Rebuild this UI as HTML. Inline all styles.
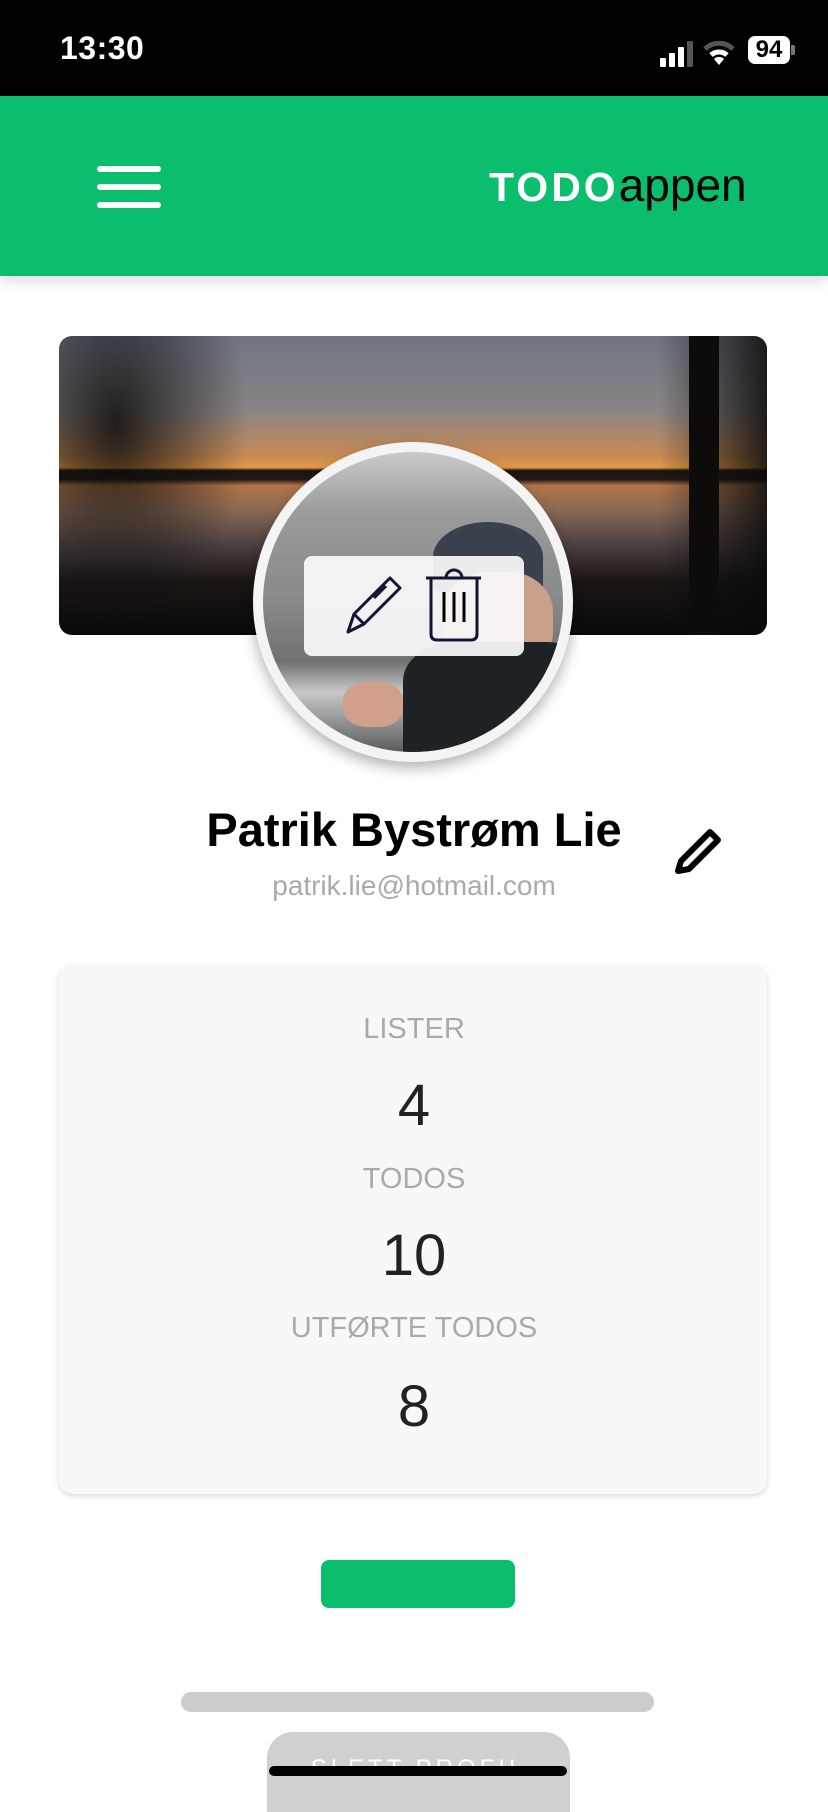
<!DOCTYPE html>
<html><head><meta charset="utf-8"><style>
*{margin:0;padding:0;box-sizing:border-box}
body{width:828px;height:1792px;overflow:hidden;background:#fff;font-family:"Liberation Sans",sans-serif;position:relative}
.abs{position:absolute}
</style></head><body>
<div class="abs" style="left:0;top:0;width:828px;height:96px;background:#000"></div>
<div class="abs" style="left:60px;top:30px;color:#fff;font-size:32px;font-weight:600;letter-spacing:0.5px">13:30</div>
<div class="abs" style="left:660px;top:58px;width:6px;height:9px;background:#fff;border-radius:1px"></div>
<div class="abs" style="left:669px;top:53px;width:6px;height:14px;background:#fff;border-radius:1px"></div>
<div class="abs" style="left:678px;top:47px;width:6px;height:20px;background:#fff;border-radius:1px"></div>
<div class="abs" style="left:687px;top:41px;width:6px;height:26px;background:#555;border-radius:1px"></div>
<svg class="abs" style="left:703px;top:38px" width="32" height="30" viewBox="0 0 32 30"><path d="M2 11 A20 20 0 0 1 30 11" stroke="#555" stroke-width="5" fill="none"/><path d="M8 17 A12 12 0 0 1 24 17" stroke="#fff" stroke-width="5" fill="none"/><path d="M11 21 L16 27 L21 21 A7 7 0 0 0 11 21Z" fill="#fff"/></svg>
<div class="abs" style="left:748px;top:36px;width:42px;height:28px;background:#fff;border-radius:7px;color:#000;font-weight:700;font-size:24px;line-height:28px;text-align:center">94</div>
<div class="abs" style="left:791px;top:45px;width:4px;height:10px;background:#777;border-radius:0 2px 2px 0"></div>

<div class="abs" style="left:0;top:96px;width:828px;height:180px;background:#0bbe6d;box-shadow:0 6px 12px rgba(0,0,0,0.12)"></div>
<div class="abs" style="left:97px;top:166px;width:64px;height:6px;background:#fff;border-radius:3px"></div>
<div class="abs" style="left:97px;top:184px;width:64px;height:6px;background:#fff;border-radius:3px"></div>
<div class="abs" style="left:97px;top:202px;width:64px;height:6px;background:#fff;border-radius:3px"></div>
<div class="abs" style="left:489px;top:160px;line-height:50px;white-space:nowrap"><span style="color:#fff;font-weight:700;letter-spacing:3px;font-size:41px">TODO</span><span style="color:#000;font-size:46px">appen</span></div>

<div class="abs" style="left:59px;top:336px;width:708px;height:299px;border-radius:13px;overflow:hidden;background:linear-gradient(#6f7382 0%,#8a8585 25%,#c88a55 40%,#e59a45 44%,#1a1512 45%,#221a14 48%,#b27447 50%,#8a6a55 58%,#4a4040 70%,#1a1614 82%,#0b0a09 100%)">
<div class="abs" style="left:0;top:0;width:190px;height:299px;background:radial-gradient(ellipse at 30% 30%,rgba(10,10,10,0.85),rgba(10,10,10,0) 70%)"></div>
<div class="abs" style="left:600px;top:0;width:108px;height:299px;background:linear-gradient(90deg,rgba(10,10,10,0),rgba(10,10,10,0.85))"></div>
<div class="abs" style="left:630px;top:0;width:30px;height:299px;background:#0e0c0b"></div>
</div>

<div class="abs" style="left:253px;top:442px;width:320px;height:320px;border-radius:50%;background:#f4f4f4;box-shadow:0 6px 14px rgba(0,0,0,0.3)"></div>
<div class="abs" style="left:263px;top:452px;width:300px;height:300px;border-radius:50%;overflow:hidden;background:linear-gradient(#c8cacc 0%,#9a9c9c 20%,#888a8a 50%,#707272 70%,#c8c8c8 80%,#5a5c5e 100%)">
<div class="abs" style="left:170px;top:70px;width:110px;height:70px;border-radius:50% 50% 10% 10%;background:#3a404c"></div>
<div class="abs" style="left:180px;top:120px;width:110px;height:100px;background:#c9a08a;border-radius:40%"></div>
<div class="abs" style="left:140px;top:190px;width:180px;height:130px;background:#1e2224;border-radius:30% 20% 0 0"></div>
<div class="abs" style="left:80px;top:230px;width:60px;height:45px;background:#d0a08c;border-radius:40%"></div>
</div>
<div class="abs" style="left:304px;top:556px;width:220px;height:100px;background:rgba(250,250,250,0.93);border-radius:8px"></div>
<svg class="abs" style="left:340px;top:570px" width="80" height="70" viewBox="0 0 80 70">
<g fill="none" stroke="#141433" stroke-width="3" stroke-linejoin="round"><path d="M8 62 L14 44 L50 8 L60 18 L24 54 Z"/><path d="M14 44 L24 54"/><path d="M34 28 L46 16"/></g></svg>
<svg class="abs" style="left:424px;top:568px" width="60" height="76" viewBox="0 0 60 76">
<g fill="none" stroke="#141433" stroke-width="3"><path d="M2 10 H57"/><path d="M22 10 A8 8 0 0 1 38 10"/><path d="M7 10 V66 Q7 72 13 72 H47 Q53 72 53 66 V10"/></g>
<g stroke="#000" stroke-width="3"><path d="M20 24V54M30 24V54M40 24V54"/></g></svg>

<div class="abs" style="left:0;top:802px;width:828px;text-align:center;font-size:47px;font-weight:700;color:#000;line-height:56px">Patrik Bystrøm Lie</div>
<svg class="abs" style="left:672px;top:827px" width="52" height="50" viewBox="0 0 52 50"><path d="M6 44 L9 34 L38 5 L46 13 L17 42 Z" fill="none" stroke="#000" stroke-width="6" stroke-linejoin="round"/></svg>
<div class="abs" style="left:0;top:870px;width:828px;text-align:center;font-size:28px;color:#aaa">patrik.lie@hotmail.com</div>

<div class="abs" style="left:59px;top:965px;width:708px;height:529px;background:#f8f8f8;border-radius:14px;box-shadow:0 2px 6px rgba(0,0,0,0.15)"></div>
<div class="abs" style="left:0;top:1013px;width:828px;text-align:center;font-size:29px;color:#aaa">LISTER</div>
<div class="abs" style="left:0;top:1072px;width:828px;text-align:center;font-size:58px;color:#222">4</div>
<div class="abs" style="left:0;top:1163px;width:828px;text-align:center;font-size:29px;color:#aaa">TODOS</div>
<div class="abs" style="left:0;top:1222px;width:828px;text-align:center;font-size:58px;color:#222">10</div>
<div class="abs" style="left:0;top:1312px;width:828px;text-align:center;font-size:29px;color:#aaa">UTFØRTE TODOS</div>
<div class="abs" style="left:0;top:1373px;width:828px;text-align:center;font-size:58px;color:#222">8</div>

<div class="abs" style="left:321px;top:1560px;width:194px;height:48px;background:#0bbe6d;border-radius:8px"></div>
<div class="abs" style="left:181px;top:1692px;width:473px;height:20px;background:#cccccc;border-radius:10px"></div>
<div class="abs" style="left:267px;top:1732px;width:303px;height:80px;background:#d0d0d0;border-radius:26px 26px 0 0"></div>
<div class="abs" style="left:267px;top:1755px;width:303px;text-align:center;color:#fff;font-size:24px;letter-spacing:4px">SLETT PROFIL</div>
<div class="abs" style="left:269px;top:1766px;width:298px;height:10px;background:#000;border-radius:5px"></div>
</body></html>
